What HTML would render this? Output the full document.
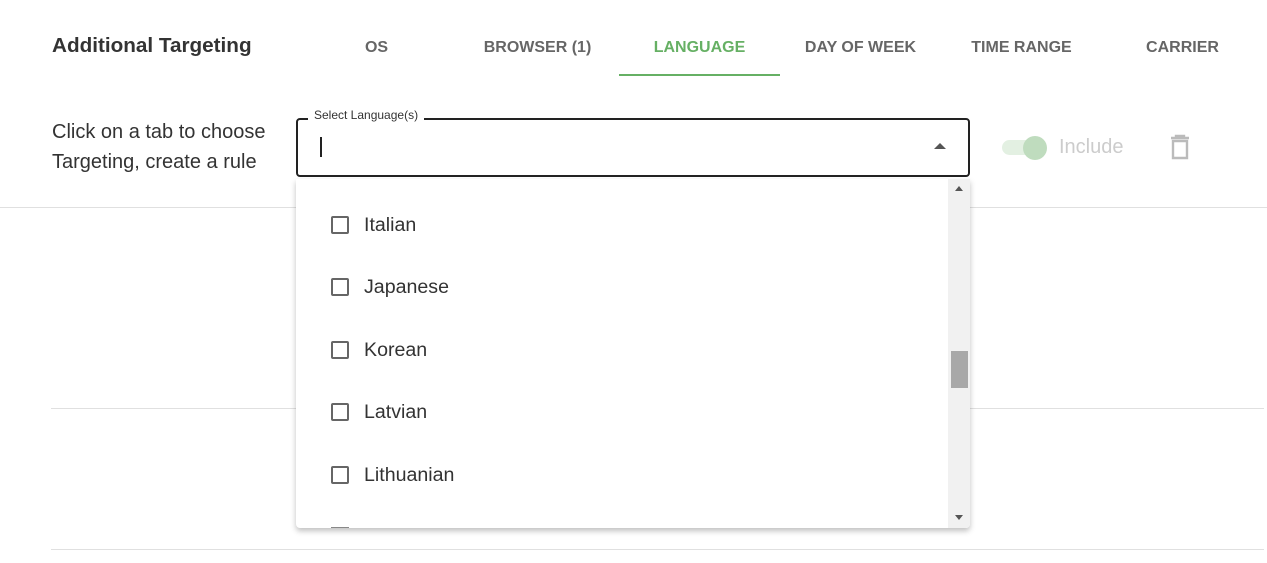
<!DOCTYPE html>
<html><head><style>
body{margin:0;width:1267px;height:563px;background:#fff;font-family:"Liberation Sans",Arial,sans-serif;position:relative;overflow:hidden}
.a{position:absolute}
.tab{position:absolute;top:39px;width:161px;text-align:center;font-size:16px;font-weight:bold;color:#666;letter-spacing:0}
.cb{position:absolute;left:331px;width:14px;height:14px;border:2px solid #666;border-radius:2px}
.it{position:absolute;left:364px;font-size:19.6px;color:#333}
</style></head><body>
<div class="a" style="left:52px;top:34px;font-size:20.7px;font-weight:bold;color:#333">Additional Targeting</div>
<div class="tab" style="left:296px">OS</div>
<div class="tab" style="left:457px">BROWSER (1)</div>
<div class="tab" style="left:619px;color:#66b064">LANGUAGE</div>
<div class="tab" style="left:780px">DAY OF WEEK</div>
<div class="tab" style="left:941px">TIME RANGE</div>
<div class="tab" style="left:1102px">CARRIER</div>
<div class="a" style="left:619px;top:74px;width:161px;height:2px;background:#66b064"></div>
<div class="a" style="left:52px;top:117px;font-size:20px;line-height:30px;color:#333">Click on a tab to choose<br>Targeting, create a rule</div>
<div class="a" style="left:296px;top:118px;width:670px;height:55px;border:2px solid #222;border-radius:4px"></div>
<div class="a" style="left:308px;top:108px;padding:0 6px;background:#fff;font-size:12px;color:#333">Select Language(s)</div>
<div class="a" style="left:320px;top:137px;width:2px;height:20px;background:#222"></div>
<div class="a" style="left:934px;top:143px;border-left:6px solid transparent;border-right:6px solid transparent;border-top:0;border-bottom:6px solid #555"></div>
<div class="a" style="left:1002px;top:140px;width:36px;height:15px;border-radius:8px;background:#e3f0e2"></div>
<div class="a" style="left:1023px;top:136px;width:24px;height:24px;border-radius:50%;background:#bfdcbe"></div>
<div class="a" style="left:1059px;top:136px;font-size:20px;color:#ccc">Include</div>
<svg class="a" style="left:1168px;top:134px" width="24" height="26" viewBox="0 0 24 26"><path d="M3 4h18M8 4V2h8v2M5 7h14v17H5z" fill="none" stroke="#bbb" stroke-width="2.4"/></svg>
<div class="a" style="left:0;top:207px;width:1267px;height:1px;background:#e0e0e0"></div>
<div class="a" style="left:51px;top:408px;width:1213px;height:1px;background:#e0e0e0"></div>
<div class="a" style="left:51px;top:549px;width:1213px;height:1px;background:#e0e0e0"></div>
<div class="a" style="left:296px;top:179px;width:674px;height:349px;background:#fff;border-radius:0 0 4px 4px;box-shadow:0 3px 6px rgba(0,0,0,.25);overflow:hidden">
 <div class="a" style="left:652px;top:0;width:22px;height:349px;background:#f1f1f1"></div>
 <div class="a" style="left:655px;top:172px;width:17px;height:37px;background:#a8a8a8"></div>
 <div class="a" style="left:659px;top:7px;border-left:4px solid transparent;border-right:4px solid transparent;border-bottom:5px solid #555"></div>
 <div class="a" style="left:659px;top:336px;border-left:4px solid transparent;border-right:4px solid transparent;border-top:5px solid #555"></div>
 <div class="a" style="left:35px;top:348px;width:14px;height:14px;border:2px solid #888"></div>
</div>
<div class="cb" style="top:216px"></div><div class="it" style="top:214px">Italian</div>
<div class="cb" style="top:278px"></div><div class="it" style="top:276px">Japanese</div>
<div class="cb" style="top:341px"></div><div class="it" style="top:339px">Korean</div>
<div class="cb" style="top:403px"></div><div class="it" style="top:401px">Latvian</div>
<div class="cb" style="top:466px"></div><div class="it" style="top:464px">Lithuanian</div>
</body></html>
